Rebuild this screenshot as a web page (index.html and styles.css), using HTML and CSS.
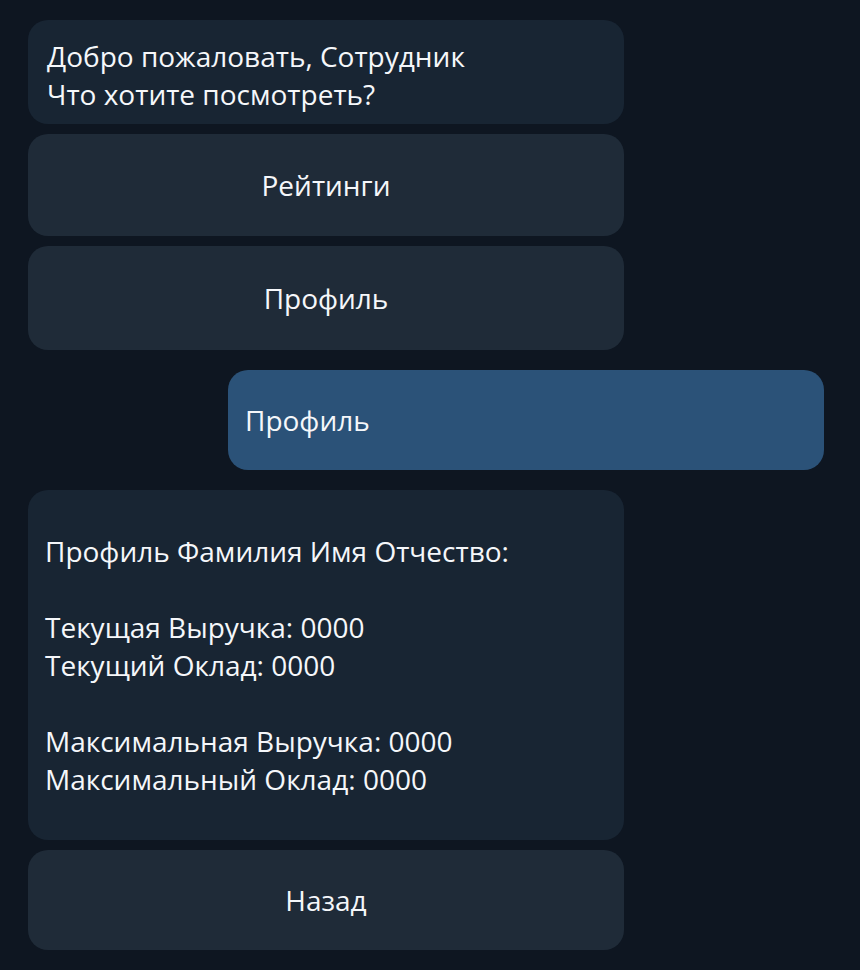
FILE: index.html
```html
<!DOCTYPE html>
<html lang="ru">
<head>
<meta charset="utf-8">
<link rel="stylesheet" href="styles.css">
</head>
<body>
<div class="chat">
  <div class="bubble in first">Добро пожаловать, Сотрудник<br>Что хотите посмотреть?</div>
  <div class="btn gap-s">Рейтинги</div>
  <div class="btn gap-s tall">Профиль</div>
  <div class="bubble out gap-l">Профиль</div>
  <div class="bubble in profile gap-l">Профиль Фамилия Имя Отчество:<br><br>Текущая Выручка: 0000<br>Текущий Оклад: 0000<br><br>Максимальная Выручка: 0000<br>Максимальный Оклад: 0000</div>
  <div class="btn gap-s last">Назад</div>
</div>
</body>
</html>
```

FILE: styles.css
```css
html, body {
  margin: 0;
  padding: 0;
  background: #0e1621;
}
body {
  font-family: "Open Sans", "Noto Sans", sans-serif;
  color: #f5f7fa;
  font-size: 28px;
  line-height: 38px;
}
.chat {
  display: flex;
  flex-direction: column;
  padding: 20px 36px 20px 28px;
  height: 970px;
  box-sizing: border-box;
}
.bubble, .btn {
  width: 596px;
  box-sizing: border-box;
  border-radius: 20px;
}
.bubble.in {
  background: #182533;
  align-self: flex-start;
}
.first {
  height: 104px;
  padding: 17px 19px 11px;
}
.btn {
  background: #1f2b38;
  height: 102px;
  display: flex;
  align-items: center;
  justify-content: center;
}
.btn.tall { height: 104px; }
.gap-s { margin-top: 10px; }
.gap-l { margin-top: 20px; }
.bubble.out {
  align-self: flex-end;
  background: #2b5278;
  height: 100px;
  display: flex;
  align-items: center;
  padding: 0 17px;
}
.profile {
  padding: 42px 17px 42px;
}
.last { height: 100px; }
```
